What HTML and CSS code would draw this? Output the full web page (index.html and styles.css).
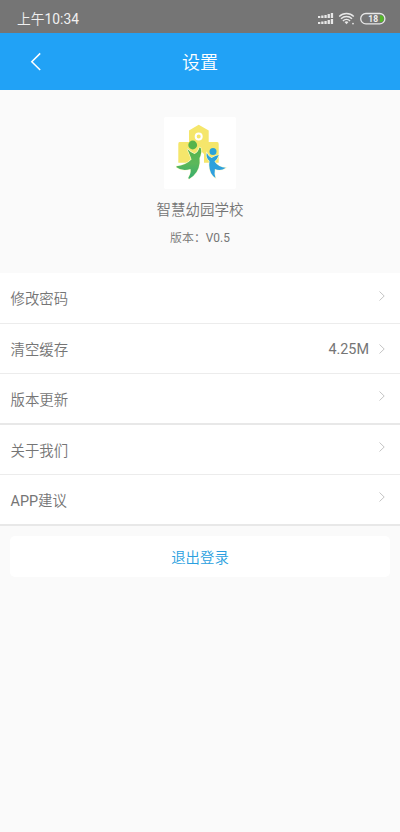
FILE: index.html
```html
<!DOCTYPE html>
<html lang="zh-CN">
<head>
<meta charset="utf-8">
<title>设置</title>
<link rel="stylesheet" href="styles.css">
</head>
<body>
<div class="status">
  <span class="time">上午<b>10:34</b></span>
  <svg class="status-icons" width="70" height="16" viewBox="0 0 70 16">
    <g fill="#e8e8e8">
      <path d="M1 5h2.300v2h-2.300zM4.200 4.500h2.300v2.500h-2.300zM7.400 4h2.300v3h-2.300zM10.600 3h2.300v4h-2.300zM13.800 2h2.300v5h-2.300z"/>
      <path d="M1 11h2.300v2h-2.300zM4.200 10.500h2.300v2.500h-2.300zM7.400 10h2.300v3h-2.300zM10.600 9h2.300v4h-2.300zM13.800 8h2.300v5h-2.300z"/>
      <path d="M29.500 13.300l-2-2.200a2.900 2.900 0 0 1 4 0z"/>
      <circle cx="36" cy="12.600" r=".9"/>
    </g>
    <path d="M22.200 5.400a10.500 10.500 0 0 1 14.600 0M24 7.700a7.900 7.900 0 0 1 11 0M25.900 9.900a5.200 5.200 0 0 1 7.200 0" fill="none" stroke="#e8e8e8" stroke-width="1.400"/>
    <rect x="43.700" y="2.500" width="24.200" height="10.400" rx="5.200" fill="none" stroke="#e8e8e8" stroke-width="1.300"/>
    <path d="M62.900 4.300h.4a3.400 3.400 0 0 1 0 6.800h-.4z" fill="#55b82a"/>
    <text class="battery" x="56.200" y="11" text-anchor="middle">18</text>
  </svg>
</div>
<header class="bar">
  <svg class="back" width="12" height="20" viewBox="0 0 12 20"><path d="M10.200 1.400L1.800 9.700l8.400 8.300" fill="none" stroke="#fff" stroke-width="1.500"/></svg>
  <h1>设置</h1>
</header>
<section class="about">
  <svg class="logo" width="72" height="72" viewBox="0 0 72 72">
    <defs>
      <linearGradient id="green" x1="0" y1="0" x2="0" y2="1"><stop offset="0" stop-color="#55b34b"/><stop offset=".5" stop-color="#5cb85a"/><stop offset="1" stop-color="#35ad70"/></linearGradient>
      <linearGradient id="blue" x1="0" y1="0" x2="0" y2="1"><stop offset="0" stop-color="#2ba3d8"/><stop offset="1" stop-color="#2f9fe0"/></linearGradient>
      <path id="adult" d="M23.300 32Q26.500 35.500 30.500 37Q34 35.500 35.500 30.500L36.700 31Q38 36 35.500 41L35.600 46Q34.500 56.500 25 62L24.300 61Q27.500 55.500 26.500 52Q18 54.500 12.500 50.200V49.300Q21.500 48.500 27.500 42.500Q26.500 39 23.300 32z"/>
      <path id="child" d="M42.800 36Q44.500 39.500 47.500 41Q51.500 38.500 54.800 38Q53.500 42 50.500 44.500Q54.500 50.500 61.900 50.800Q56.500 54.500 50.900 52Q50 56.500 51.500 61Q45.500 57 45.200 48L45.500 44Q41.500 40.500 42.800 36z"/>
    </defs>
    <rect width="72" height="72" rx="2" fill="#fff"/>
    <path d="M15.500 25H25V13.500L34.700 7.700 44.700 13.500V25h8.500q1.500 0 1.500 2v18.700h-14.700V37l-2-2-2 3v7.700H14.300V27q0-2 1.200-2z" fill="#f5e66b"/>
    <circle cx="34.700" cy="19.500" r="3" fill="#f5e66b" stroke="#fff" stroke-width="2"/>
    <use href="#adult" fill="none" stroke="#fffbd0" stroke-width="1.200"/>
    <use href="#child" fill="none" stroke="#fffbd0" stroke-width="1.200"/>
    <use href="#adult" fill="url(#green)"/>
    <use href="#child" fill="url(#blue)"/>
    <circle cx="28.700" cy="28" r="4.400" fill="#55b34b"/>
    <circle cx="49" cy="34.500" r="3.500" fill="#2ba3d8"/>
  </svg>
  <p class="name">智慧幼园学校</p>
  <p class="version">版本：<b>V0.5</b></p>
</section>
<ul class="list">
  <li><span>修改密码</span><svg class="arrow high" viewBox="0 0 6 10"><path d="M.5.5L5.200 5 .5 9.500"/></svg></li>
  <li><span>清空缓存</span><span class="value">4.25M</span><svg class="arrow" viewBox="0 0 6 10"><path d="M.5.5L5.200 5 .5 9.500"/></svg></li>
  <li class="strong"><span>版本更新</span><svg class="arrow high" viewBox="0 0 6 10"><path d="M.5.5L5.200 5 .5 9.500"/></svg></li>
  <li><span>关于我们</span><svg class="arrow high" viewBox="0 0 6 10"><path d="M.5.5L5.200 5 .5 9.500"/></svg></li>
  <li class="strong"><span><b>APP</b>建议</span><svg class="arrow high" viewBox="0 0 6 10"><path d="M.5.5L5.200 5 .5 9.500"/></svg></li>
</ul>
<button class="logout">退出登录</button>
</body>
</html>
```
FILE: styles.css
```css
* { box-sizing: border-box; }
body {
  margin: 0;
  min-height: 832px;
  background: #fafafa;
  color: #757575;
  font-family: Roboto, "Noto Sans CJK SC", sans-serif;
  font-weight: 350;
}
h1, p, ul { margin: 0; padding: 0; }
b { font-weight: 400; }
.status {
  display: flex;
  align-items: center;
  justify-content: space-between;
  height: 33px;
  padding: 5px 13px 0 17px;
  background: #757575;
  color: #f0f0f0;
}
.time { font: 350 13.800px/20px Roboto, "Noto Sans CJK SC", sans-serif; }
.battery { font: 700 8.500px Roboto, sans-serif; fill: #f0f0f0; }
.bar {
  display: grid;
  grid-template-columns: 30px 1fr 30px;
  align-items: center;
  height: 57px;
  padding: 0 30px;
  background: #21a2f6;
  color: #fff;
}
.bar h1 {
  padding-top: 2px;
  font-size: 18px;
  line-height: 26px;
  font-weight: 350;
  text-align: center;
}
.back { display: block; }
.about {
  display: flex;
  flex-direction: column;
  align-items: center;
  height: 183px;
  padding-top: 27px;
}
.name { margin-top: 11px; font-size: 14.500px; line-height: 22px; }
.version { margin-top: 7px; font-size: 11.900px; line-height: 18px; }
.list { list-style: none; padding-top: 1px; background: #fff; }
.list li {
  display: flex;
  align-items: center;
  height: 50px;
  padding: 2px 15px 0 10.500px;
  border-bottom: 1px solid #ececec;
  font-size: 14.400px;
  line-height: 22px;
}
.list span { padding-top: 2px; }
.list li:first-child span { padding-top: 1px; }
.list .strong { height: 51px; border-bottom: 2px solid #e8e8e8; }
.list .value { margin-left: auto; padding-top: 1px; font-weight: 400; }
.arrow {
  width: 6px;
  height: 10px;
  margin-left: auto;
  fill: none;
  stroke: #c4c4c4;
  stroke-width: 1;
}
.value + .arrow { margin: 0 0 1px 10px; }
.list .high { margin-bottom: 7px; }
.logout {
  display: block;
  width: 380px;
  height: 41px;
  margin: 10px auto 0;
  padding: 0;
  border: 0;
  border-radius: 5px;
  background: #fff;
  color: #2a9fe0;
  font: 350 14.400px/22px "Noto Sans CJK SC", sans-serif;
}
```
